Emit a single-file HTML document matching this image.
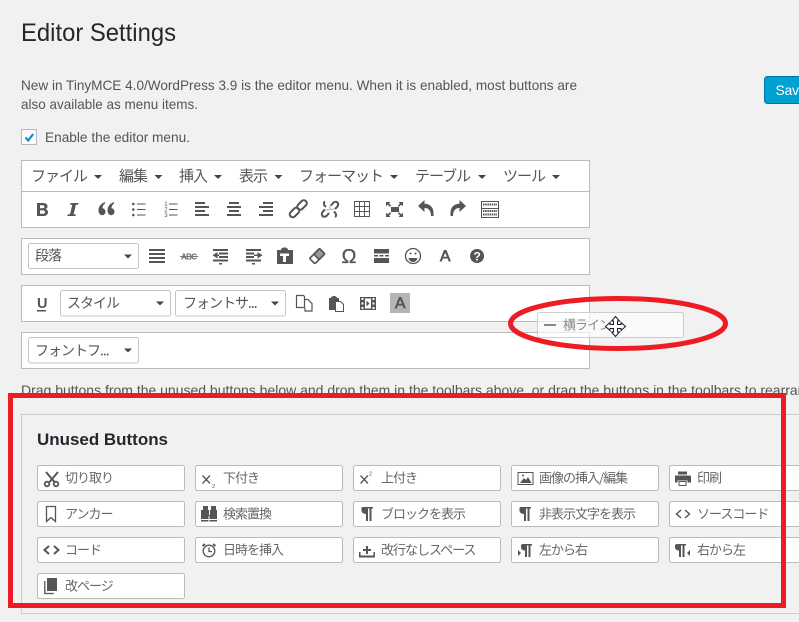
<!DOCTYPE html>
<html lang="ja">
<head>
<meta charset="utf-8">
<title>Editor Settings</title>
<style>
html,body{margin:0;padding:0;background:#f1f1f1;width:799px;height:622px;overflow:hidden}
svg{display:block;position:absolute;left:0;top:0}
text{font-family:"Liberation Sans","Noto Sans CJK JP",sans-serif}
.jp{font-family:"Noto Sans CJK JP","Liberation Sans",sans-serif;font-weight:400}
.p{font-size:14px;fill:#555}
.m{font-size:15px;fill:#555;letter-spacing:-1px}
.s{font-size:14px;fill:#555;letter-spacing:-1px}
.b{font-size:13px;fill:#666;letter-spacing:-1px}
.box{fill:#fff;stroke:#bbb;stroke-width:1}
.sel{fill:#fff;stroke:#c4c4c4;stroke-width:1}
.btn{fill:#fff;stroke:#bbb;stroke-width:1}
.i{fill:#555}
.a{fill:#444}
</style>
</head>
<body>
<svg width="799" height="622" viewBox="0 0 799 622" xmlns="http://www.w3.org/2000/svg">
<rect width="799" height="622" fill="#f1f1f1"/>

<text x="21" y="41" font-size="25" fill="#23282d" textLength="155" lengthAdjust="spacingAndGlyphs">Editor Settings</text>
<text x="21" y="90" class="p" textLength="556" lengthAdjust="spacingAndGlyphs">New in TinyMCE 4.0/WordPress 3.9 is the editor menu. When it is enabled, most buttons are</text>
<text x="21" y="109" class="p" textLength="177" lengthAdjust="spacingAndGlyphs">also available as menu items.</text>

<rect x="21.500" y="129.500" width="15" height="15" fill="#fbfbfb" stroke="#b4b9be"/>
<path d="M25.500 137.500l2.700 3 5-6.500" fill="none" stroke="#1e8cbe" stroke-width="2.200"/>
<text x="45" y="142" class="p" textLength="145" lengthAdjust="spacingAndGlyphs">Enable the editor menu.</text>

<!-- Save -->
<rect x="764.500" y="76.500" width="60" height="27" rx="3" fill="#00a0d2" stroke="#0073aa"/>
<text x="775.500" y="95" font-size="14" fill="#fff" textLength="31">Save</text>

<!-- toolbar 1 -->
<rect class="box" x="21.500" y="160.500" width="568" height="67"/>
<line x1="22" y1="191.500" x2="589" y2="191.500" stroke="#bbb"/>
<text x="31" y="181" class="m jp">ファイル</text><path class="a" d="M94 175h8l-4 4z"/>
<text x="119" y="181" class="m jp">編集</text><path class="a" d="M154.500 175h8l-4 4z"/>
<text x="179" y="181" class="m jp">挿入</text><path class="a" d="M214 175h8l-4 4z"/>
<text x="239" y="181" class="m jp">表示</text><path class="a" d="M274.500 175h8l-4 4z"/>
<text x="299" y="181" class="m jp">フォーマット</text><path class="a" d="M390 175h8l-4 4z"/>
<text x="415" y="181" class="m jp">テーブル</text><path class="a" d="M478 175h8l-4 4z"/>
<text x="503" y="181" class="m jp">ツール</text><path class="a" d="M552 175h8l-4 4z"/>

<!-- row 2 icons -->
<path class="i" fill-rule="evenodd" d="M37 203h6c3 0 4.500 1.500 4.500 3.300 0 1.500-.8 2.400-2 2.800 1.700.4 2.500 1.500 2.500 3 0 2.200-1.800 3.900-4.800 3.900H37zM40 205.300v3h2.500c1.200 0 2-.6 2-1.500s-.8-1.500-2-1.500zM40 210.400v3.400h3c1.300 0 2-.7 2-1.700s-.7-1.700-2-1.700z"/>
<path class="i" d="M70.500 203h8l-.4 1.700h-2.200l-2.300 9.600h2.200l-.4 1.700h-8l.4-1.700h2.200l2.300-9.600h-2.200z"/>
<path class="i" d="M105 202c-4 1.500-6.500 4.500-6.500 8.300 0 3 1.500 4.900 3.500 4.900s3.500-1.500 3.500-3.500-1.500-3.500-3-3.500c0-2.200 1-3.700 2.500-4.700zM114 202c-4 1.500-6.500 4.500-6.500 8.300 0 3 1.500 4.900 3.500 4.900s3.500-1.500 3.500-3.500-1.500-3.500-3-3.500c0-2.200 1-3.700 2.500-4.700z"/>
<g class="i"><circle cx="133.300" cy="204" r="1.300"/><circle cx="133.300" cy="209.500" r="1.300"/><circle cx="133.300" cy="215" r="1.300"/><rect x="137" y="203.500" width="8.500" height="1"/><rect x="137" y="209" width="8.500" height="1"/><rect x="137" y="214.500" width="8.500" height="1"/></g>
<g class="i"><text x="164.300" y="206" font-size="6" fill="#555">1</text><text x="164.300" y="211.500" font-size="6" fill="#555">2</text><text x="164.300" y="217" font-size="6" fill="#555">3</text><rect x="169" y="203.500" width="8.500" height="1"/><rect x="169" y="209" width="8.500" height="1"/><rect x="169" y="214.500" width="8.500" height="1"/></g>
<g class="i"><rect x="195" y="202" width="10" height="2"/><rect x="195" y="206" width="14" height="2"/><rect x="195" y="210" width="10" height="2"/><rect x="195" y="214" width="14" height="2"/></g>
<g class="i"><rect x="229" y="202" width="10" height="2"/><rect x="227" y="206" width="14" height="2"/><rect x="229" y="210" width="10" height="2"/><rect x="227" y="214" width="14" height="2"/></g>
<g class="i"><rect x="263" y="202" width="10" height="2"/><rect x="259" y="206" width="14" height="2"/><rect x="263" y="210" width="10" height="2"/><rect x="259" y="214" width="14" height="2"/></g>
<g fill="none" stroke="#555" stroke-width="2"><rect x="299" y="199.500" width="6" height="11" rx="3" transform="rotate(45 302 205)"/><rect x="291.500" y="207" width="6" height="11" rx="3" transform="rotate(45 294.500 212.500)"/></g>
<g fill="none" stroke="#555" stroke-width="2"><path d="M331 205.500l2-2.500c1.500-1.500 3.500-1.500 4.500-.5s1 3-.5 4.500l-2 2"/><path d="M329 213l-2 2.500c-1.500 1.500-3.500 1.500-4.500.5s-1-3 .5-4.500l2-2"/><path d="M325 201.500c-1.500 1-1.500 3 0 4.500l1 1M335 217c1.500-1 1.500-3 0-4.500l-1-1"/><path d="M330 205v4M326 209.500l4 .5M334 209l-4 .5" stroke="#aaa" stroke-width="1"/></g>
<g fill="none" stroke="#555"><rect x="354.500" y="201.500" width="15" height="15"/><path d="M359.500 202v14M364.500 202v14M355 206.500h14M355 211.500h14"/></g>
<g class="i"><rect x="391" y="207" width="8" height="5"/><path d="M386 202h4.500l-1.500 1.500 2.200 2.200-1.200 1.200-2.200-2.200-1.800 1.500zM403 202h-4.500l1.500 1.500-2.200 2.200 1.200 1.200 2.200-2.200 1.800 1.500zM386 217h4.500l-1.500-1.500 2.200-2.200-1.200-1.200-2.200 2.200-1.800-1.500zM403 217h-4.500l1.500-1.500-2.200-2.200 1.200-1.200 2.200 2.200 1.800-1.500z"/></g>
<path class="i" d="M418 206l6.500-6v3.800c5.300 0 9 3.500 9 9v3.200H431c0-5-2.200-8-6.500-8v4z"/>
<path class="i" d="M466 206l-6.500-6v3.800c-5.300 0-9 3.500-9 9v3.200h2.500c0-5 2.200-8 6.500-8v4z"/>
<g><rect x="481.500" y="201.500" width="17" height="16" fill="none" stroke="#555"/><line x1="481" y1="208.500" x2="499" y2="208.500" stroke="#555"/><path d="M483 204.500h14M483 211h14M483 214.500h14" stroke="#555" stroke-width="2" stroke-dasharray="1.500 .7"/></g>

<!-- toolbar 2 -->
<rect class="box" x="21.500" y="238.500" width="568" height="36"/>
<rect class="sel" x="28.500" y="243.500" width="110" height="25" rx="2"/>
<text x="35" y="260.500" class="s jp">段落</text><path class="a" d="M124 254.500h8l-4 4z"/>
<g class="i"><rect x="149" y="249" width="16" height="2"/><rect x="149" y="253" width="16" height="2"/><rect x="149" y="257" width="16" height="2"/><rect x="149" y="261" width="16" height="2"/></g>
<text x="181" y="259.500" font-size="8" font-weight="bold" fill="#666" textLength="16">ABC</text><line x1="180" y1="256.500" x2="198" y2="256.500" stroke="#777"/>
<g class="i"><rect x="213" y="249" width="15" height="2"/><rect x="219" y="252.500" width="9" height="2"/><rect x="219" y="256" width="9" height="2"/><rect x="213" y="259.500" width="15" height="2"/><rect x="219" y="263" width="3" height="1.500"/><path d="M217.500 252v6.500l-5-3.250z"/><rect x="217" y="254.500" width="2" height="1.500"/></g>
<g class="i"><rect x="246" y="249" width="15" height="2"/><rect x="246" y="252.500" width="8" height="2"/><rect x="246" y="256" width="8" height="2"/><rect x="246" y="259.500" width="15" height="2"/><rect x="252" y="263" width="3" height="1.500"/><path d="M257.500 252v6.500l5-3.250z"/><rect x="254" y="254.500" width="4" height="1.500"/></g>
<path class="i" fill-rule="evenodd" d="M277 250h4c0-1.500 1.500-2.500 3.500-2.500s3.500 1 3.500 2.500h5v14h-16zM280 253.500v2.500h3v6h3v-6h3v-2.500z"/>
<g transform="rotate(-45 317 256)"><rect x="310" y="252.500" width="14" height="7.500" rx="1.200" fill="#fff" stroke="#555" stroke-width="1.700"/><rect x="316" y="252.500" width="8" height="7.500" rx="1" fill="#999" stroke="#555" stroke-width="1.700"/></g>
<text x="341.500" y="263" font-size="20" fill="#555" stroke="#555" stroke-width=".3" textLength="15">Ω</text>
<g class="i"><rect x="374" y="249" width="15" height="4.500"/><rect x="374" y="255" width="4" height="1.500"/><rect x="379.500" y="255" width="4" height="1.500"/><rect x="385" y="255" width="4" height="1.500"/><rect x="374" y="258" width="15" height="5"/></g>
<g fill="none" stroke="#555" stroke-width="1.300"><circle cx="413" cy="256" r="7.500"/></g><circle class="i" cx="410.500" cy="253.500" r="1"/><circle class="i" cx="415.500" cy="253.500" r="1"/><path class="i" d="M408.500 258h9c-.5 2.500-2.300 4-4.500 4s-4-1.500-4.500-4z"/>
<path class="i" fill-rule="evenodd" d="M444 250h2.400l4.600 11.500h-2.300l-1.100-3h-4.700l-1.100 3h-2.300zM445.200 252.800l-1.700 4h3.400z"/>
<circle class="i" cx="477" cy="256" r="7"/><text x="473.500" y="260.500" font-size="12" font-weight="bold" fill="#fff">?</text>

<!-- toolbar 3 -->
<rect class="box" x="21.500" y="285.500" width="568" height="36"/>
<text x="37" y="308" font-size="14.500" font-weight="bold" fill="#555">U</text><rect x="37" y="310" width="9" height="1.500" fill="#555"/>
<rect class="sel" x="60.500" y="290.500" width="110" height="25.500" rx="2"/>
<text x="67" y="308" class="s jp">スタイル</text><path class="a" d="M156 301.500h8l-4 4z"/>
<rect class="sel" x="175.500" y="290.500" width="110" height="25.500" rx="2"/>
<text x="183" y="308" class="s jp">フォントサ...</text><path class="a" d="M271 301.500h8l-4 4z"/>
<path fill="none" stroke="#555" stroke-width="1.200" d="M296.500 295.500h7l1 1v11h-8zM304 299.500h4l4 4v7.500h-7v-3"/>
<path class="i" fill-rule="evenodd" d="M329 298h2c0-1 1.500-2 3-2s3 1 3 2h2v3h-3v9h-7z"/><path fill="#fff" stroke="#555" d="M335.500 301.500h5l3 3v7h-8z"/>
<path fill="#555" fill-rule="evenodd" d="M360 297h16v13h-16zM361.500 298v2h2v-2zM361.500 302.500v2h2v-2zM361.500 307v2h2v-2zM372.500 298v2h2v-2zM372.500 302.500v2h2v-2zM372.500 307v2h2v-2zM365 298.500v10h6v-10zM366.500 300.500l3 3-3 3z"/>
<rect x="390" y="293" width="20" height="20" fill="#b5b5b5"/>
<path class="i" fill-rule="evenodd" d="M399 297h2.400l4.600 11.500h-2.300l-1.100-3h-4.700l-1.100 3h-2.300zM400.200 299.800l-1.700 4h3.400z"/>

<!-- toolbar 4 -->
<rect class="box" x="21.500" y="332.500" width="568" height="36"/>
<rect class="sel" x="28.500" y="337.500" width="110" height="25.500" rx="2"/>
<text x="35" y="355.500" class="s jp">フォントフ...</text><path class="a" d="M124 348.500h8l-4 4z"/>

<!-- drag hint -->
<text x="21" y="395" class="p" textLength="800" lengthAdjust="spacingAndGlyphs">Drag buttons from the unused buttons below and drop them in the toolbars above, or drag the buttons in the toolbars to rearrange</text>

<!-- unused -->
<rect x="21.500" y="414.500" width="800" height="199" fill="none" stroke="#ccc"/>
<text x="37" y="445" font-size="16.500" font-weight="bold" fill="#23282d" textLength="131" lengthAdjust="spacingAndGlyphs">Unused Buttons</text>

<g>
<rect class="btn" x="37.500" y="465.500" width="147" height="25" rx="2"/>
<rect class="btn" x="195.500" y="465.500" width="147" height="25" rx="2"/>
<rect class="btn" x="353.500" y="465.500" width="147" height="25" rx="2"/>
<rect class="btn" x="511.500" y="465.500" width="147" height="25" rx="2"/>
<rect class="btn" x="669.500" y="465.500" width="147" height="25" rx="2"/>
<rect class="btn" x="37.500" y="501.500" width="147" height="25" rx="2"/>
<rect class="btn" x="195.500" y="501.500" width="147" height="25" rx="2"/>
<rect class="btn" x="353.500" y="501.500" width="147" height="25" rx="2"/>
<rect class="btn" x="511.500" y="501.500" width="147" height="25" rx="2"/>
<rect class="btn" x="669.500" y="501.500" width="147" height="25" rx="2"/>
<rect class="btn" x="37.500" y="537.500" width="147" height="25" rx="2"/>
<rect class="btn" x="195.500" y="537.500" width="147" height="25" rx="2"/>
<rect class="btn" x="353.500" y="537.500" width="147" height="25" rx="2"/>
<rect class="btn" x="511.500" y="537.500" width="147" height="25" rx="2"/>
<rect class="btn" x="669.500" y="537.500" width="147" height="25" rx="2"/>
<rect class="btn" x="37.500" y="573.500" width="147" height="25" rx="2"/>
</g>

<text x="65" y="482.500" class="b jp">切り取り</text>
<text x="223" y="482.500" class="b jp">下付き</text>
<text x="381" y="482.500" class="b jp">上付き</text>
<text x="539" y="482.500" class="b jp">画像の挿入/編集</text>
<text x="697" y="482.500" class="b jp">印刷</text>
<text x="65" y="518.500" class="b jp">アンカー</text>
<text x="223" y="518.500" class="b jp">検索置換</text>
<text x="381" y="518.500" class="b jp">ブロックを表示</text>
<text x="539" y="518.500" class="b jp">非表示文字を表示</text>
<text x="697" y="518.500" class="b jp">ソースコード</text>
<text x="65" y="554.500" class="b jp">コード</text>
<text x="223" y="554.500" class="b jp">日時を挿入</text>
<text x="381" y="554.500" class="b jp">改行なしスペース</text>
<text x="539" y="554.500" class="b jp">左から右</text>
<text x="697" y="554.500" class="b jp">右から左</text>
<text x="65" y="590.500" class="b jp">改ページ</text>

<!-- button icons -->
<g fill="none" stroke="#555" stroke-width="1.800"><circle cx="47" cy="484" r="2.300"/><circle cx="56" cy="484" r="2.300"/><path d="M46 472l8.500 10M58 472l-8.500 10" stroke-width="2"/></g>
<path d="M202.500 475.500l7.500 8M210 475.500l-7.500 8" stroke="#555" stroke-width="1.300"/><text x="212" y="488" font-size="5.500" fill="#555">2</text>
<path d="M360.500 475.500l7.500 8M368 475.500l-7.500 8" stroke="#555" stroke-width="1.300"/><text x="369" y="475.500" font-size="5.500" fill="#555">2</text>
<path fill="#555" fill-rule="evenodd" d="M517.500 472h16v13h-16zM518.500 473v11h14v-11z"/><path class="i" d="M520 483l4-5 2 2 2-3 3.500 6z"/><circle class="i" cx="523" cy="475.500" r="1"/>
<path class="i" fill-rule="evenodd" d="M678 471.500h9v3h-9zM675 475.500h15c.6 0 1 .5 1 1v6h-3.500v-2h-10v2H675z"/><path fill="#fff" stroke="#555" d="M679 481.500h7v4h-7z"/>
<path fill="none" stroke="#555" stroke-width="1.300" d="M46.500 506.500h9v15l-4.500-4-4.500 4z"/>
<path class="i" d="M203 506h5v4h1v5h1v-5h1v-4h5v4h1v9h-7.500v-3h-1v3H201v-9h2z"/><path class="i" d="M201 520h7.500v1.500H201zM209.500 520H217v1.500h-7.500z"/>
<path class="i" d="M363 507h10v1.500h-1.500v12.500h-2v-12.500h-1.500v12.500h-2v-7c-2.500 0-4.500-1.500-4.500-3.500S361 507 363 507z"/>
<path class="i" d="M521 507h10v1.500h-1.500v12.500h-2v-12.500h-1.500v12.500h-2v-7c-2.500 0-4.500-1.500-4.500-3.500S519 507 521 507z"/>
<path fill="none" stroke="#555" stroke-width="1.500" d="M681 510l-4.500 4 4.500 4M685 510l4.500 4-4.500 4"/>
<path fill="none" stroke="#555" stroke-width="2" d="M49 546l-4.500 4 4.500 4M54 546l4.500 4-4.500 4"/>
<g fill="none" stroke="#555" stroke-width="1.300"><circle cx="209" cy="551" r="5.800"/><path d="M209 547.500v4h3"/><path d="M202.500 546l2.500-2M215.500 546l-2.500-2" stroke-width="1.800"/></g>
<path class="i" d="M359 552h1.500v3.500h13V552h1.500v5.500h-16zM366 549v-3h2v3h3v2h-3v3h-2v-3h-3v-2z"/>
<path class="i" d="M523 544h9v1.500h-1.500v11.500h-2v-11.500h-1.500v11.500h-2v-6.500c-2.500 0-4-1.300-4-3.200S521 544 523 544zM518 550l3 3-3 3z"/>
<path class="i" d="M677 544h9v1.500h-1.500v11.500h-2v-11.500h-1.500v11.500h-2v-6.500c-2.500 0-4-1.300-4-3.200S675 544 677 544zM690 550v6l-3-3z"/>
<path class="i" d="M47 578h10v13h-10z"/><path fill="none" stroke="#555" stroke-width="1.300" d="M44.800 581v12.500h9"/>

<!-- dragged ghost -->
<rect x="537.500" y="312.500" width="146" height="25" rx="2" fill="#fff" fill-opacity=".65" stroke="#bbb" stroke-opacity=".7"/>
<rect x="544" y="324" width="12" height="2" fill="#888"/>
<text x="563" y="329.500" class="b jp" style="fill:#888">横ライン</text>

<!-- move cursor -->
<path fill="#fff" stroke="#1a1a2a" stroke-width="1" d="M615.500 316.500l4 4.500h-2v3.500h3.500v-2l4.500 4-4.500 4v-2h-3.500v3.500h2l-4 4.500-4-4.500h2v-3.500H610v2l-4.500-4 4.500-4v2h3.500V321h-2z"/>

<!-- red annotations -->
<ellipse cx="618" cy="323.500" rx="107.500" ry="25" fill="none" stroke="#ed1c24" stroke-width="5"/>
<rect x="10.500" y="395.500" width="773" height="210" fill="none" stroke="#ed1c24" stroke-width="5"/>
</svg>
</body>
</html>
